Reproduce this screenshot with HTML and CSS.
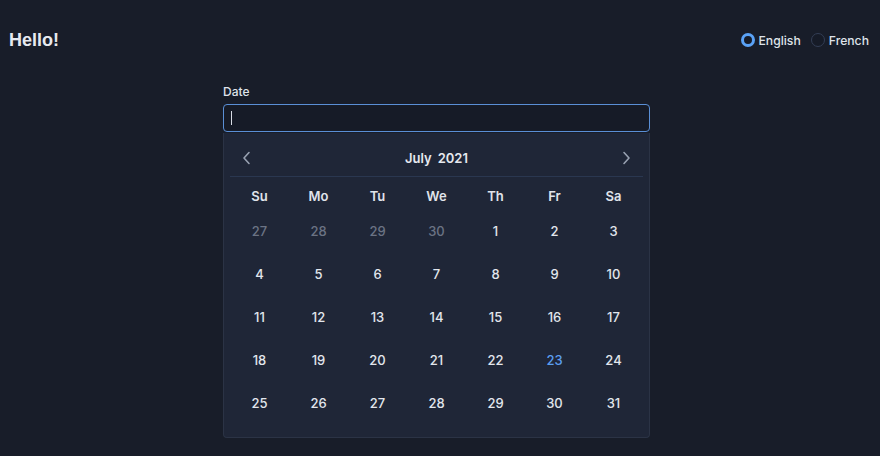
FILE: index.html
```
<!DOCTYPE html>
<html lang="en">
<head>
    <meta charset="UTF-8">
    <meta name="viewport" content="width=device-width, initial-scale=1.0">
    <title>Date picker</title>
    <link rel="stylesheet" href="styles.css">
</head>
<body>

    <header class="topbar">
        <h1 class="hello">Hello!</h1>
        <div class="lang-switch">
            <label class="radio checked"><span class="dot"></span>English</label>
            <label class="radio"><span class="dot"></span>French</label>
        </div>
    </header>

    <main class="form">
        <div class="field">
            <div class="field-label">Date</div>
            <div class="date-input"><span class="caret"></span></div>

            <div class="calendar">
                <div class="cal-head">
                    <button class="nav-btn" aria-label="Previous month">
                        <svg width="10" height="14" viewBox="0 0 10 14"><polyline points="7,1.5 2,7 7,12.5" fill="none" stroke="currentColor" stroke-width="1.6" stroke-linecap="round" stroke-linejoin="round"/></svg>
                    </button>
                    <div class="cal-title"><span>July</span><span>2021</span></div>
                    <button class="nav-btn" aria-label="Next month">
                        <svg width="10" height="14" viewBox="0 0 10 14"><polyline points="3,1.5 8,7 3,12.5" fill="none" stroke="currentColor" stroke-width="1.6" stroke-linecap="round" stroke-linejoin="round"/></svg>
                    </button>
                </div>

                <div class="weekdays">
                    <span>Su</span><span>Mo</span><span>Tu</span><span>We</span><span>Th</span><span>Fr</span><span>Sa</span>
                </div>

                <div class="days">
                    <span class="muted">27</span><span class="muted">28</span><span class="muted">29</span><span class="muted">30</span><span>1</span><span>2</span><span>3</span>
                    <span>4</span><span>5</span><span>6</span><span>7</span><span>8</span><span>9</span><span>10</span>
                    <span>11</span><span>12</span><span>13</span><span>14</span><span>15</span><span>16</span><span>17</span>
                    <span>18</span><span>19</span><span>20</span><span>21</span><span>22</span><span class="today">23</span><span>24</span>
                    <span>25</span><span>26</span><span>27</span><span>28</span><span>29</span><span>30</span><span>31</span>
                </div>
            </div>
        </div>
    </main>

</body>
</html>
```

FILE: styles.css
```
body {
    margin: 0;
    background-color: #181d29;
    color: #e2e6ed;
    font-family: Inter, "Noto Sans", sans-serif;
    font-size: 13px;
}

.topbar {
    display: flex;
    justify-content: space-between;
    align-items: center;
    height: 80px;
    padding: 0 11px 0 9px;
}

.hello {
    margin: 0;
    font-family: "Liberation Sans", Arial, sans-serif;
    font-size: 18px;
    font-weight: bold;
    color: #e6e9ef;
}

.lang-switch {
    display: flex;
    gap: 10px;
}

.radio {
    display: flex;
    align-items: center;
    gap: 4px;
    font-size: 12.2px;
    font-weight: 500;
    color: #dfe3ea;
}

.radio .dot {
    width: 14px;
    height: 14px;
    box-sizing: border-box;
    border-radius: 50%;
    border: 1px solid #333e55;
    background-color: #161b27;
}

.radio.checked .dot {
    border: 3px solid #5aa2f6;
}

.form {
    padding: 4px 0 0 223px;
}

.field {
    width: 427px;
}

.field-label {
    line-height: 16px;
    margin-bottom: 4px;
    font-size: 12px;
    font-weight: 500;
    color: #dfe3ea;
}

.date-input {
    height: 28px;
    box-sizing: border-box;
    border: 1px solid #5a8fd6;
    border-radius: 4px;
    background-color: #161b27;
    display: flex;
    align-items: center;
    padding-left: 7px;
}

.caret {
    width: 1px;
    height: 14px;
    background-color: #d8dce4;
}

.calendar {
    background-color: #1f2637;
    border: 1px solid #2b3345;
    border-top: none;
    border-radius: 0 0 4px 4px;
    padding: 6px 6px 12px;
    margin-top: 1px;
}

.cal-head {
    height: 37px;
    display: flex;
    align-items: center;
    justify-content: space-between;
    border-bottom: 1px solid #2a3750;
    padding: 0 12px;
}

.nav-btn {
    background: none;
    border: none;
    padding: 0;
    color: #98a1b1;
    display: flex;
}

.cal-title {
    display: flex;
    gap: 6px;
    font-weight: 600;
    color: #e6e9ef;
}

.weekdays, .days {
    display: grid;
    grid-template-columns: repeat(7, 59px);
}

.weekdays {
    padding-top: 6px;
}

.weekdays span {
    height: 27px;
    line-height: 26px;
    text-align: center;
    font-weight: 600;
    color: #e0e4eb;
}

.days span {
    height: 43px;
    line-height: 43px;
    text-align: center;
    font-weight: 500;
    color: #e2e6ed;
}

.days .muted {
    color: #6b7384;
}

.days .today {
    color: #5b9ef0;
}
```
